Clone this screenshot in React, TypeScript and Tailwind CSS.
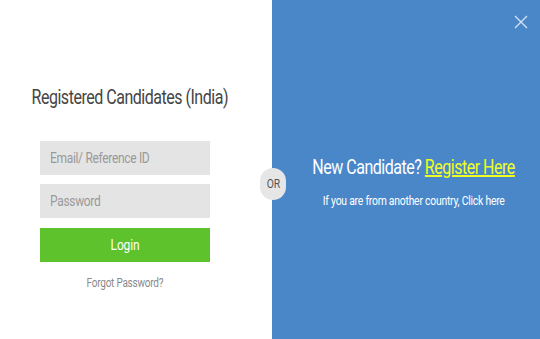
import type { ReactNode } from "react"

// Roboto squeezed to stand in for the condensed face in the shot
function Narrow({ children, className = "" }: { children: ReactNode; className?: string }) {
  return <span className={`inline-block scale-x-[0.8] whitespace-nowrap ${className}`}>{children}</span>
}

function Field({ placeholder, type = "text" }: { placeholder: string; type?: string }) {
  return (
    <div className="h-[34px] w-[170px] overflow-hidden bg-[#e4e4e4]">
      <input
        type={type}
        placeholder={placeholder}
        className="h-[34px] w-[212.5px] origin-left scale-x-[0.8] bg-transparent px-[12.5px] text-[15px] tracking-[-0.4px] text-[#555] outline-none placeholder:text-[#999]"
      />
    </div>
  )
}

export default function App() {
  return (
    <div className="relative flex h-[339px] w-[540px] overflow-hidden bg-white" style={{ fontFamily: "Roboto, 'Liberation Sans', sans-serif" }}>
      {/* Login side */}
      <div className="flex w-[272px] shrink-0 flex-col pt-[85px]">
        <h2 className="mb-[32px] w-[260px] text-center text-[20px] leading-6 tracking-[-0.6px] text-[#444]">
          <Narrow>Registered Candidates (India)</Narrow>
        </h2>
        <div className="ml-[40px] flex w-[170px] flex-col gap-[9px]">
          <Field placeholder="Email/ Reference ID" />
          <Field placeholder="Password" type="password" />
          <button className="mt-px h-[34px] w-full bg-[#5dc22b] text-[15px] tracking-[-0.2px] text-white">
            <Narrow>Login</Narrow>
          </button>
          <a href="#" className="mt-[3px] text-center text-[12.5px] tracking-[-0.3px] text-[#8a8a8a]">
            <Narrow>Forgot Password?</Narrow>
          </a>
        </div>
      </div>

      {/* Register side */}
      <div className="relative flex min-w-0 flex-1 flex-col items-center bg-[#4a87c9] pl-[16px] pt-[155px]">
        <button className="absolute right-[12px] top-[15px] text-[#d6e4f4]">
          <svg width="14" height="14" viewBox="0 0 14 14" fill="none" stroke="currentColor" strokeWidth="1.3">
            <path d="M1 1 L13 13 M13 1 L1 13" />
          </svg>
        </button>
        <p className="text-[20px] leading-6 tracking-[-0.6px] text-white">
          <Narrow>
            New Candidate? <a href="#" className="text-[#f0ff1e] underline">Register Here</a>
          </Narrow>
        </p>
        <p className="mt-[12px] text-[13px] tracking-[-0.3px] text-white">
          <Narrow>If you are from another country, Click here</Narrow>
        </p>
      </div>

      {/* OR badge */}
      <div className="absolute left-[260px] top-[168px] flex h-[32px] w-[26px] items-center justify-center rounded-full bg-[#e6e6e6] text-[13px] text-[#555]">
        <Narrow>OR</Narrow>
      </div>
    </div>
  )
}
